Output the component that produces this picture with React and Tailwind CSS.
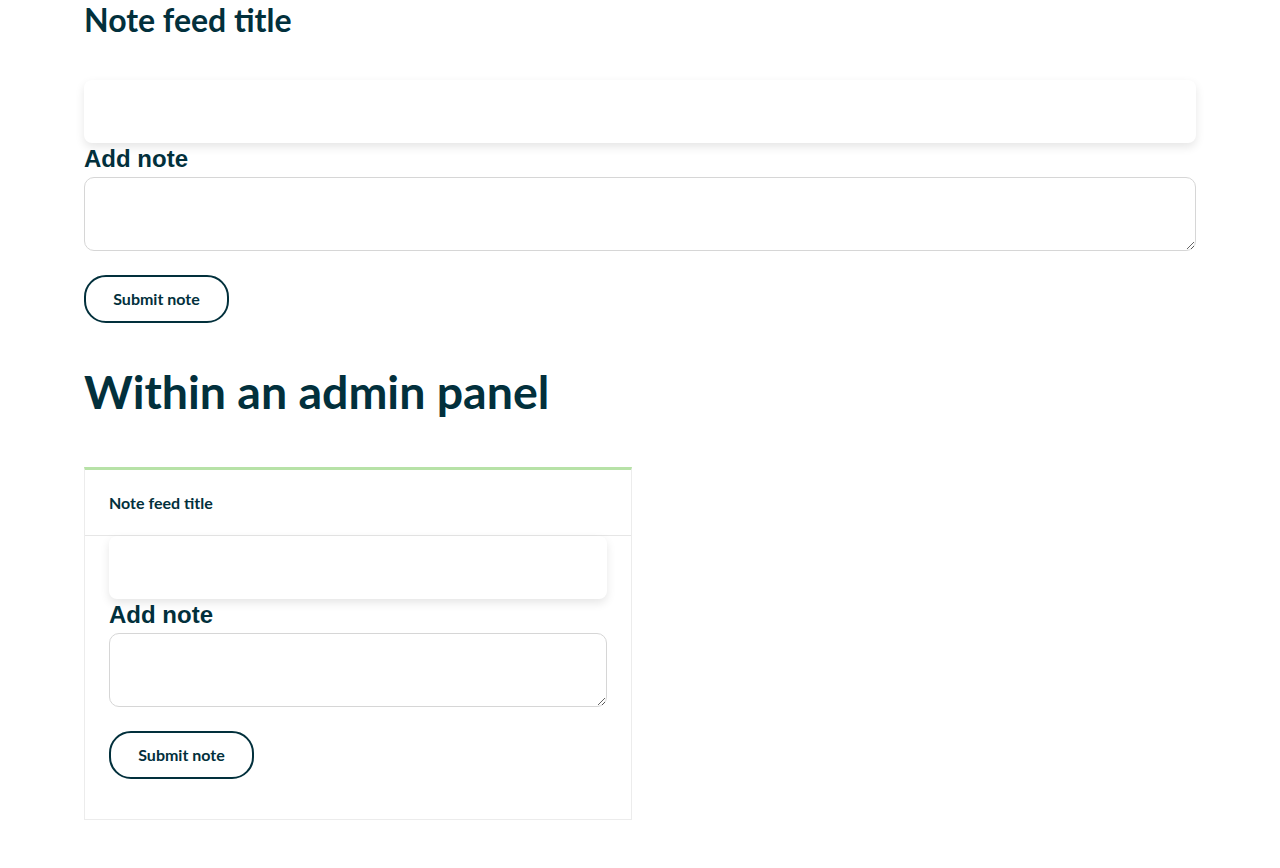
import React from "react";

const heading = { fontFamily: "Lato, 'Noto Sans', sans-serif" };

function NoteFeed({ title, inPanel }) {
  return (
    <div>
      {!inPanel && (
        <h2
          style={heading}
          className="text-[32px] font-bold leading-[40px] text-[#02303c] mb-[40px]"
        >
          {title}
        </h2>
      )}
      <div className="h-[63px] rounded-lg bg-white shadow-[0_4px_10px_rgba(0,0,0,0.1)]"></div>
      <label className="block mt-[2px] font-['Liberation_Sans',Arial,sans-serif] text-[24px] font-bold leading-[27px] text-[#02303c]">
        Add note
      </label>
      <textarea className="mt-[5px] block w-full h-[74px] rounded-[10px] border border-[#d6d6d6] bg-white"></textarea>
      <button
        style={heading}
        className="mt-[24px] h-[48px] w-[145px] rounded-[22px] border-2 border-[#02303c] bg-white text-[16px] font-bold text-[#02303c]"
      >
        Submit note
      </button>
    </div>
  );
}

export default function App() {
  return (
    <div className="min-h-[868px] bg-white px-[84px]">
      <NoteFeed title="Note feed title" />
      <h1
        style={heading}
        className="mt-[40px] text-[46.5px] font-bold leading-[56px] text-[#02303c]"
      >
        Within an admin panel
      </h1>
      <div className="mt-[48px] w-[548px] border border-[#ececec] border-t-[3px] border-t-[#b7e2a7] bg-white">
        <div className="h-[66px] flex items-center px-[24px] border-b border-[#e6e6e6]">
          <span style={heading} className="text-[16px] font-bold text-[#02303c]">
            Note feed title
          </span>
        </div>
        <div className="px-[24px] pb-[40px]">
          <NoteFeed inPanel />
        </div>
      </div>
    </div>
  );
}
